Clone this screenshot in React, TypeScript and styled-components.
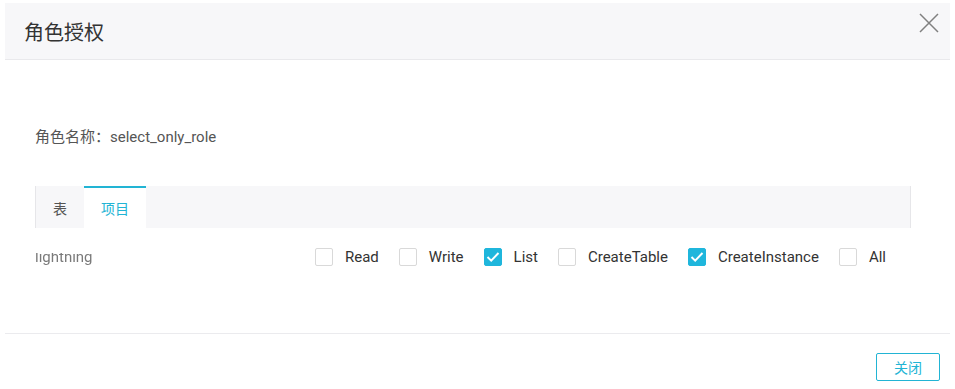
import React from 'react';
import styled, { createGlobalStyle } from 'styled-components';

const GlobalStyle = createGlobalStyle`
  body {
    margin: 0;
    background: #fff;
    font-family: Roboto, "Noto Sans CJK SC", sans-serif;
  }
`;

const Modal = styled.div`
  margin: 3px 0 0 5px;
  width: 945px;
  background: #fff;
`;

const Header = styled.div`
  height: 56px;
  display: flex;
  align-items: center;
  justify-content: space-between;
  padding: 0 10px 0 19px;
  background: #f7f7f9;
  border-bottom: 1px solid #e9e9ec;
`;

const Title = styled.h2`
  margin: 0;
  font-size: 20px;
  font-weight: 400;
  color: #333;
  font-family: "Noto Sans CJK SC", sans-serif;
`;

const CloseButton = styled.button`
  border: 0;
  background: transparent;
  padding: 0;
  width: 22px;
  height: 22px;
  margin-top: -16px;
  display: flex;
  align-items: center;
  justify-content: center;
  cursor: pointer;
`;

const Body = styled.div`
  padding: 66px 39px 0 30px;
`;

const RoleName = styled.div`
  font-size: 15px;
  line-height: 22px;
  color: #555;
`;

const TabBar = styled.div`
  margin-top: 38px;
  height: 42px;
  display: flex;
  background: #f7f7f9;
  border-left: 1px solid #e6e6e9;
  border-right: 1px solid #e6e6e9;
`;

const Tab = styled.div<{ $active?: boolean }>`
  padding: 0 17px;
  display: flex;
  align-items: center;
  font-size: 14px;
  font-family: "Noto Sans CJK SC", sans-serif;
  color: ${(p) => (p.$active ? '#22b4d4' : '#555')};
  background: ${(p) => (p.$active ? '#fff' : 'transparent')};
  border-top: 2px solid ${(p) => (p.$active ? '#22b4d4' : 'transparent')};
  box-sizing: border-box;
`;

const PermRow = styled.div`
  height: 58px;
  display: flex;
  align-items: center;
`;

const ProjectName = styled.div`
  width: 280px;
  font-size: 15px;
  color: #7a7a7a;
  filter: blur(0.7px);
  clip-path: inset(5px 0 0 0);
`;

const Options = styled.div`
  display: flex;
  align-items: center;
  gap: 20px;
`;

const Option = styled.label`
  display: flex;
  align-items: center;
  gap: 12px;
  font-size: 15px;
  color: #333;
`;

const Box = styled.span<{ $checked?: boolean }>`
  width: 18px;
  height: 18px;
  box-sizing: border-box;
  border-radius: 2px;
  border: 1px solid ${(p) => (p.$checked ? '#1fb6dc' : '#d9d9d9')};
  background: ${(p) => (p.$checked ? '#1fb6dc' : '#fff')};
  display: flex;
  align-items: center;
  justify-content: center;
`;

const Footer = styled.div`
  margin-top: 47px;
  border-top: 1px solid #ebebee;
  padding: 19px 10px 0 0;
  display: flex;
  justify-content: flex-end;
`;

const CloseBtn = styled.button`
  width: 64px;
  height: 28px;
  border: 1px solid #22b4d4;
  border-radius: 2px;
  background: #fff;
  color: #22b4d4;
  font-size: 14px;
  font-family: "Noto Sans CJK SC", sans-serif;
  cursor: pointer;
`;

const perms = [
  { name: 'Read', checked: false },
  { name: 'Write', checked: false },
  { name: 'List', checked: true },
  { name: 'CreateTable', checked: false },
  { name: 'CreateInstance', checked: true },
  { name: 'All', checked: false },
];

const Check = () => (
  <svg width="14" height="12" viewBox="0 0 14 12">
    <path d="M1.5 6 L5.2 9.6 L12.5 2" fill="none" stroke="#fff" strokeWidth="2" />
  </svg>
);

const App: React.FC = () => (
  <>
    <GlobalStyle />
    <Modal>
      <Header>
        <Title>角色授权</Title>
        <CloseButton aria-label="close">
          <svg width="20" height="20" viewBox="0 0 20 20">
            <path d="M1 1 L19 19 M19 1 L1 19" stroke="#808080" strokeWidth="1.5" fill="none" />
          </svg>
        </CloseButton>
      </Header>
      <Body>
        <RoleName>角色名称：select_only_role</RoleName>
        <TabBar>
          <Tab>表</Tab>
          <Tab $active>项目</Tab>
        </TabBar>
        <PermRow>
          <ProjectName>lightning</ProjectName>
          <Options>
            {perms.map((p) => (
              <Option key={p.name}>
                <Box $checked={p.checked}>{p.checked && <Check />}</Box>
                {p.name}
              </Option>
            ))}
          </Options>
        </PermRow>
      </Body>
      <Footer>
        <CloseBtn>关闭</CloseBtn>
      </Footer>
    </Modal>
  </>
);

export default App;
